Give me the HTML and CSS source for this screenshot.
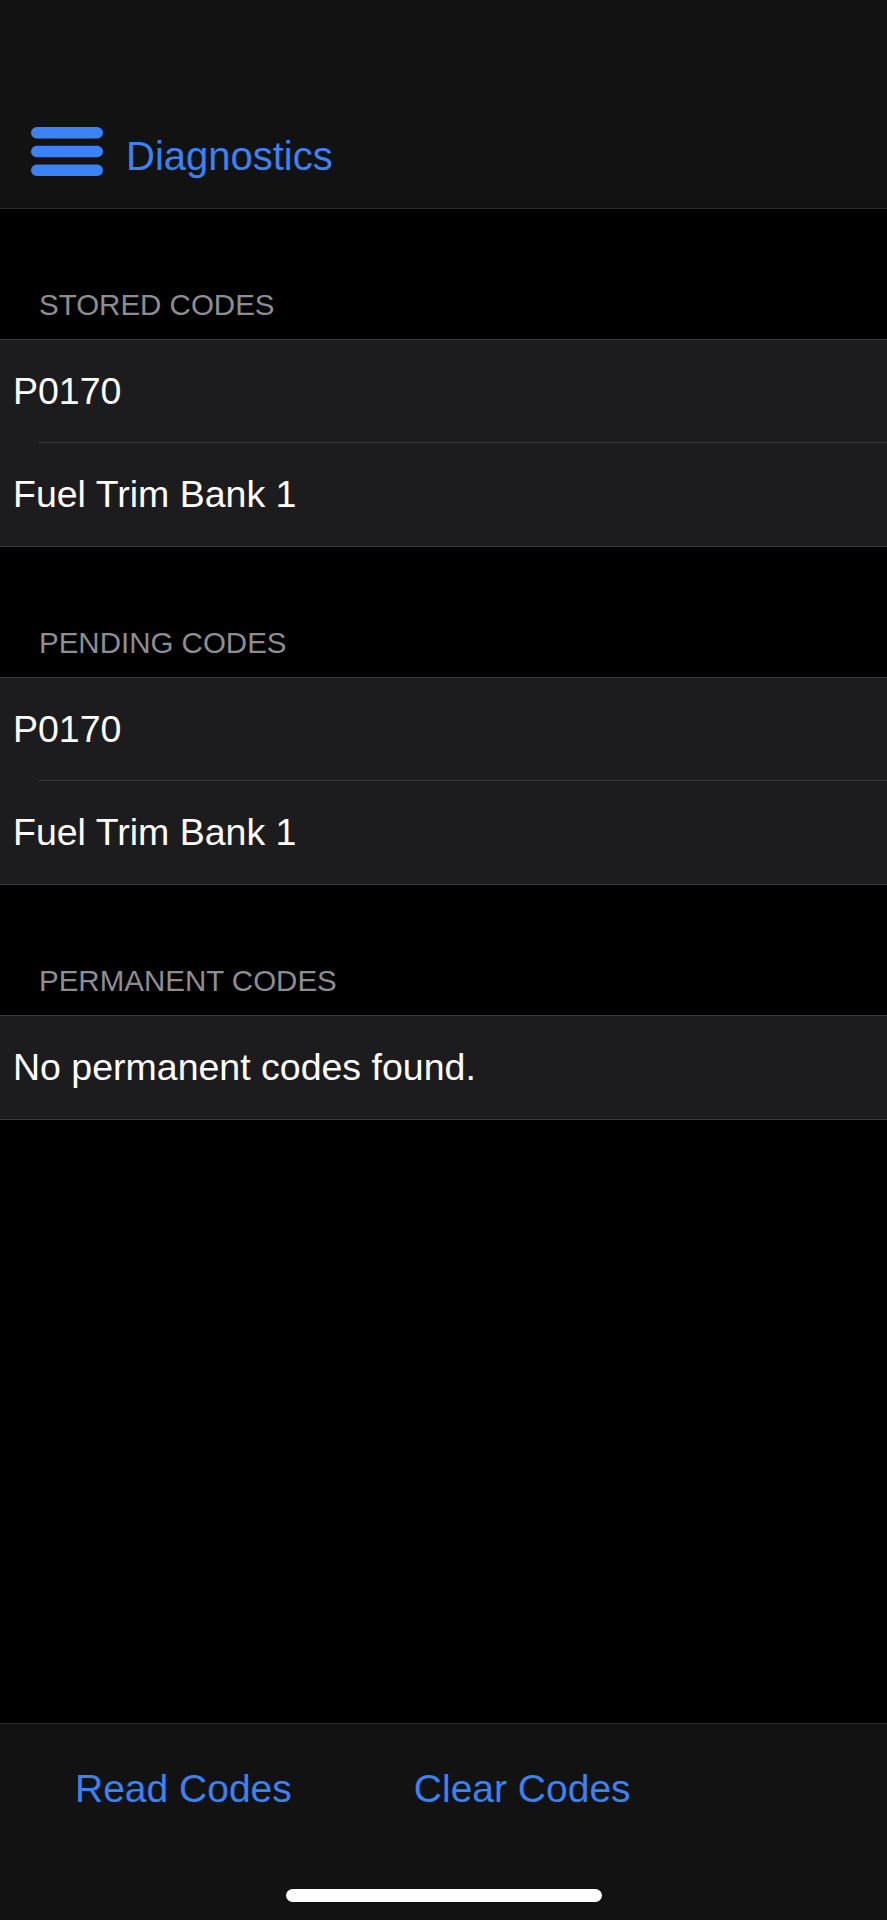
FILE: index.html
```html
<!DOCTYPE html>
<html lang="en">
<head>
    <meta charset="UTF-8">
    <meta name="viewport" content="width=device-width, initial-scale=1.0">
    <title>Diagnostics</title>
    <link rel="stylesheet" href="styles.css">
</head>
<body>

    <header class="nav-bar">
        <div class="nav-row">
            <svg class="menu-icon" width="72" height="49" viewBox="0 0 72 49">
                <rect x="0" y="0" width="72" height="11.5" rx="5.75" fill="#3a82f6"/>
                <rect x="0" y="18.75" width="72" height="11.5" rx="5.75" fill="#3a82f6"/>
                <rect x="0" y="37.5" width="72" height="11.5" rx="5.75" fill="#3a82f6"/>
            </svg>
            <span class="nav-title">Diagnostics</span>
        </div>
    </header>

    <main class="content">

        <div class="section-header">Stored Codes</div>
        <div class="group">
            <div class="row">P0170</div>
            <div class="row">Fuel Trim Bank 1</div>
        </div>

        <div class="section-header">Pending Codes</div>
        <div class="group">
            <div class="row">P0170</div>
            <div class="row">Fuel Trim Bank 1</div>
        </div>

        <div class="section-header">Permanent Codes</div>
        <div class="group">
            <div class="row">No permanent codes found.</div>
        </div>

    </main>

    <footer class="toolbar">
        <div class="toolbar-buttons">
            <a href="#" class="toolbar-btn">Read Codes</a>
            <a href="#" class="toolbar-btn">Clear Codes</a>
        </div>
        <div class="home-indicator"></div>
    </footer>

</body>
</html>
```

FILE: styles.css
```css
body {
    font-family: "Liberation Sans", Arial, sans-serif;
    background-color: #000;
    color: #fff;
    margin: 0;
    padding: 0;
    height: 1920px;
    display: flex;
    flex-direction: column;
}
.nav-bar {
    background-color: #121212;
    border-bottom: 1px solid #2a2a2a;
    box-sizing: border-box;
    height: 209px;
    padding-top: 127px;
}
.nav-row {
    display: flex;
    align-items: center;
    padding-left: 31px;
}
.menu-icon {
    display: block;
}
.nav-title {
    color: #3a82f6;
    font-size: 40px;
    line-height: 40px;
    margin-left: 23px;
    margin-top: 9px;
}
.content {
    flex: 1;
}
.section-header {
    color: #8d8d93;
    font-size: 29.5px;
    line-height: 29px;
    text-transform: uppercase;
    padding: 81px 0 20px 39px;
}
.group {
    background-color: #1c1c1e;
    border-top: 1px solid #3a3a3c;
    border-bottom: 1px solid #3a3a3c;
}
.row {
    height: 103px;
    display: flex;
    align-items: center;
    padding-left: 13px;
    font-size: 37.5px;
    position: relative;
}
/* separator is inset, the text is not */
.row + .row::before {
    content: "";
    position: absolute;
    top: -1px;
    left: 38px;
    right: 0;
    border-top: 1px solid #38383a;
}
.toolbar {
    background-color: #121212;
    border-top: 1px solid #2a2a2a;
    padding-top: 46px;
    padding-bottom: 18px;
}
.toolbar-buttons {
    display: flex;
    gap: 122px;
    padding-left: 75px;
}
.toolbar-btn {
    color: #3a82f6;
    font-size: 39px;
    line-height: 38px;
    text-decoration: none;
}
.home-indicator {
    width: 316px;
    height: 13px;
    border-radius: 7px;
    background-color: #fff;
    margin: 81px auto 0;
}
```
